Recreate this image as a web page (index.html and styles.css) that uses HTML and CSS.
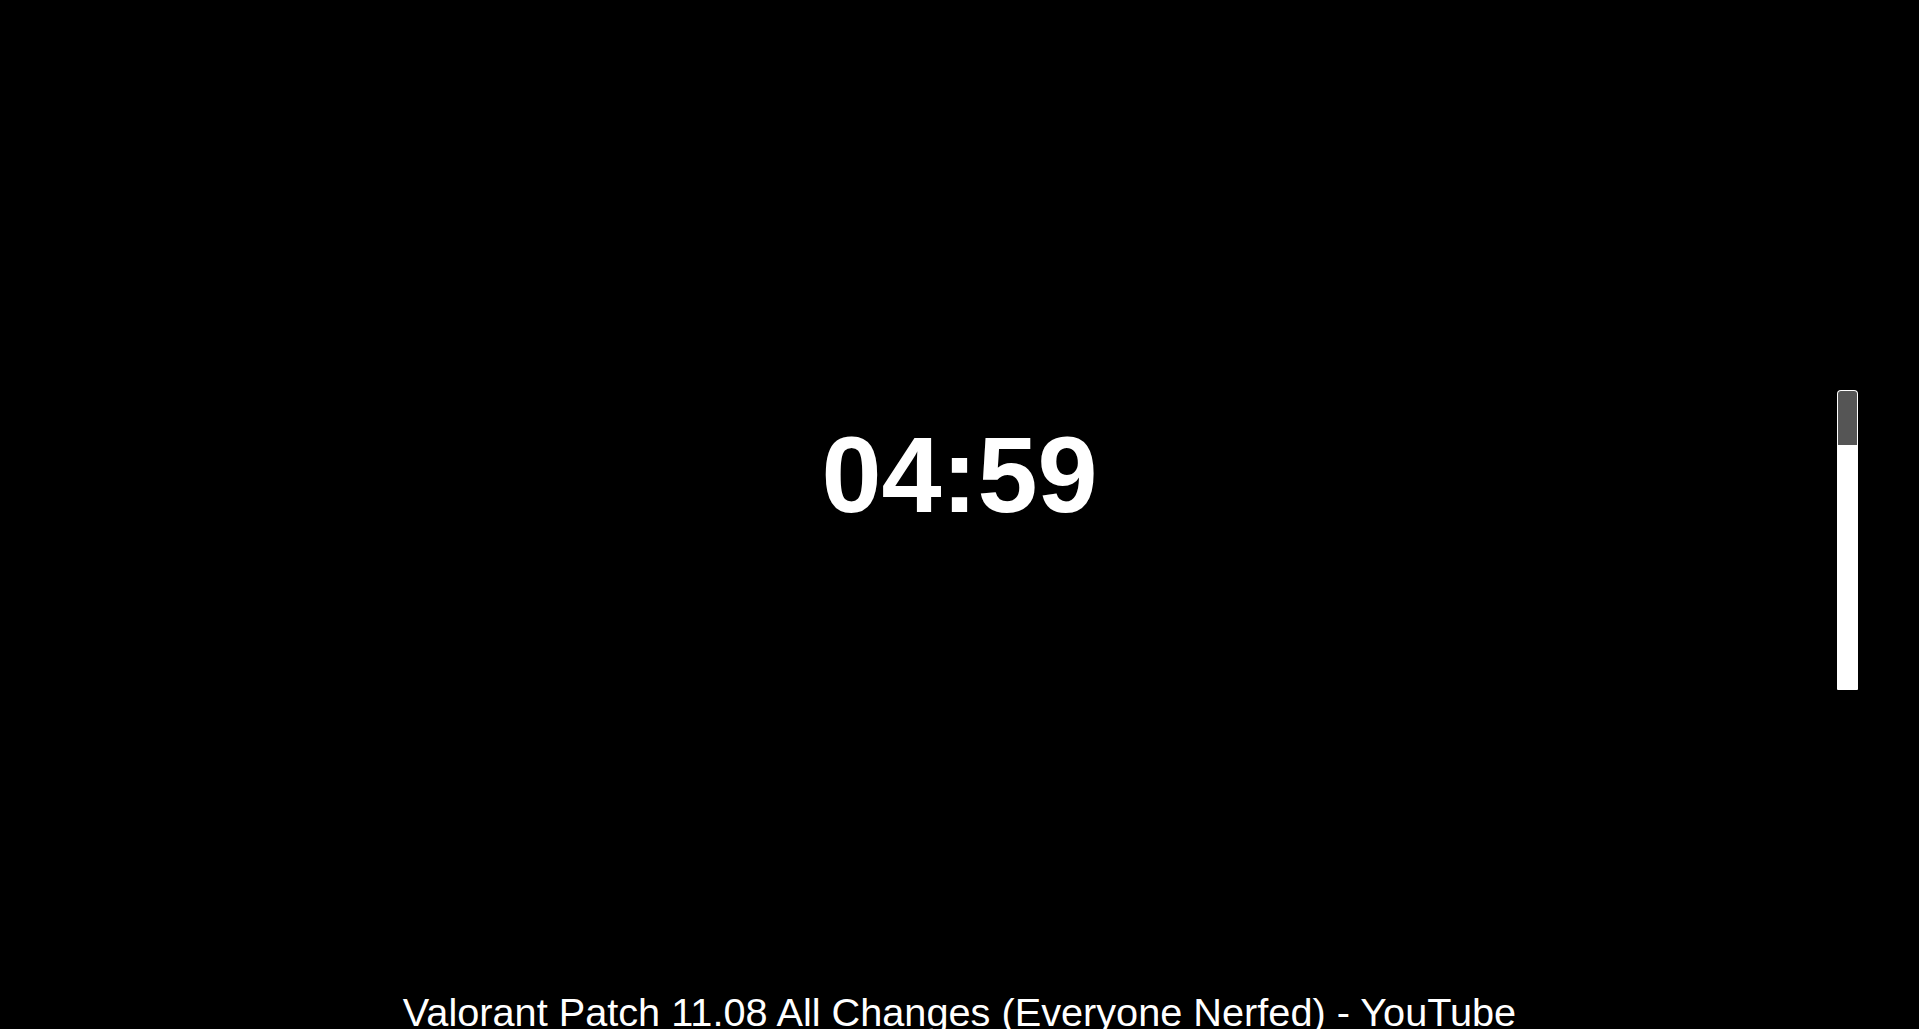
FILE: index.html
```html
<!DOCTYPE html>
<html lang="en">
<head>
<meta charset="utf-8">
<title>Timer</title>
<link rel="stylesheet" href="styles.css">
</head>
<body>
<div class="screen">
  <div class="timer">04:59</div>
  <div class="spacer"></div>
  <div class="caption">Valorant Patch 11.08 All Changes (Everyone Nerfed) - YouTube</div>
  <div class="slider"><div class="slider-thumb"></div></div>
</div>
</body>
</html>
```
FILE: styles.css
```css
html, body {
  margin: 0;
  padding: 0;
  background: #000;
  height: 100%;
  overflow: hidden;
}
.screen {
  position: relative;
  height: 100vh;
  display: flex;
  flex-direction: column;
  align-items: center;
  color: #fff;
  font-family: "Liberation Sans", Arial, sans-serif;
  padding-top: 421px;
  box-sizing: border-box;
}
.timer {
  font-size: 108px;
  font-weight: bold;
  line-height: 1;
  white-space: nowrap;
}
.spacer {
  flex: 1;
}
.caption {
  font-size: 39.7px;
  line-height: 1;
  white-space: nowrap;
  margin-bottom: -4px;
}
.slider {
  position: absolute;
  left: 1837px;
  top: 390px;
  width: 21px;
  height: 300px;
  background: #fff;
  border-radius: 4px 4px 1px 1px;
  box-sizing: border-box;
  padding: 1px;
}
.slider-thumb {
  height: 54px;
  background: #555;
  border-radius: 3px 3px 0 0;
}
```
